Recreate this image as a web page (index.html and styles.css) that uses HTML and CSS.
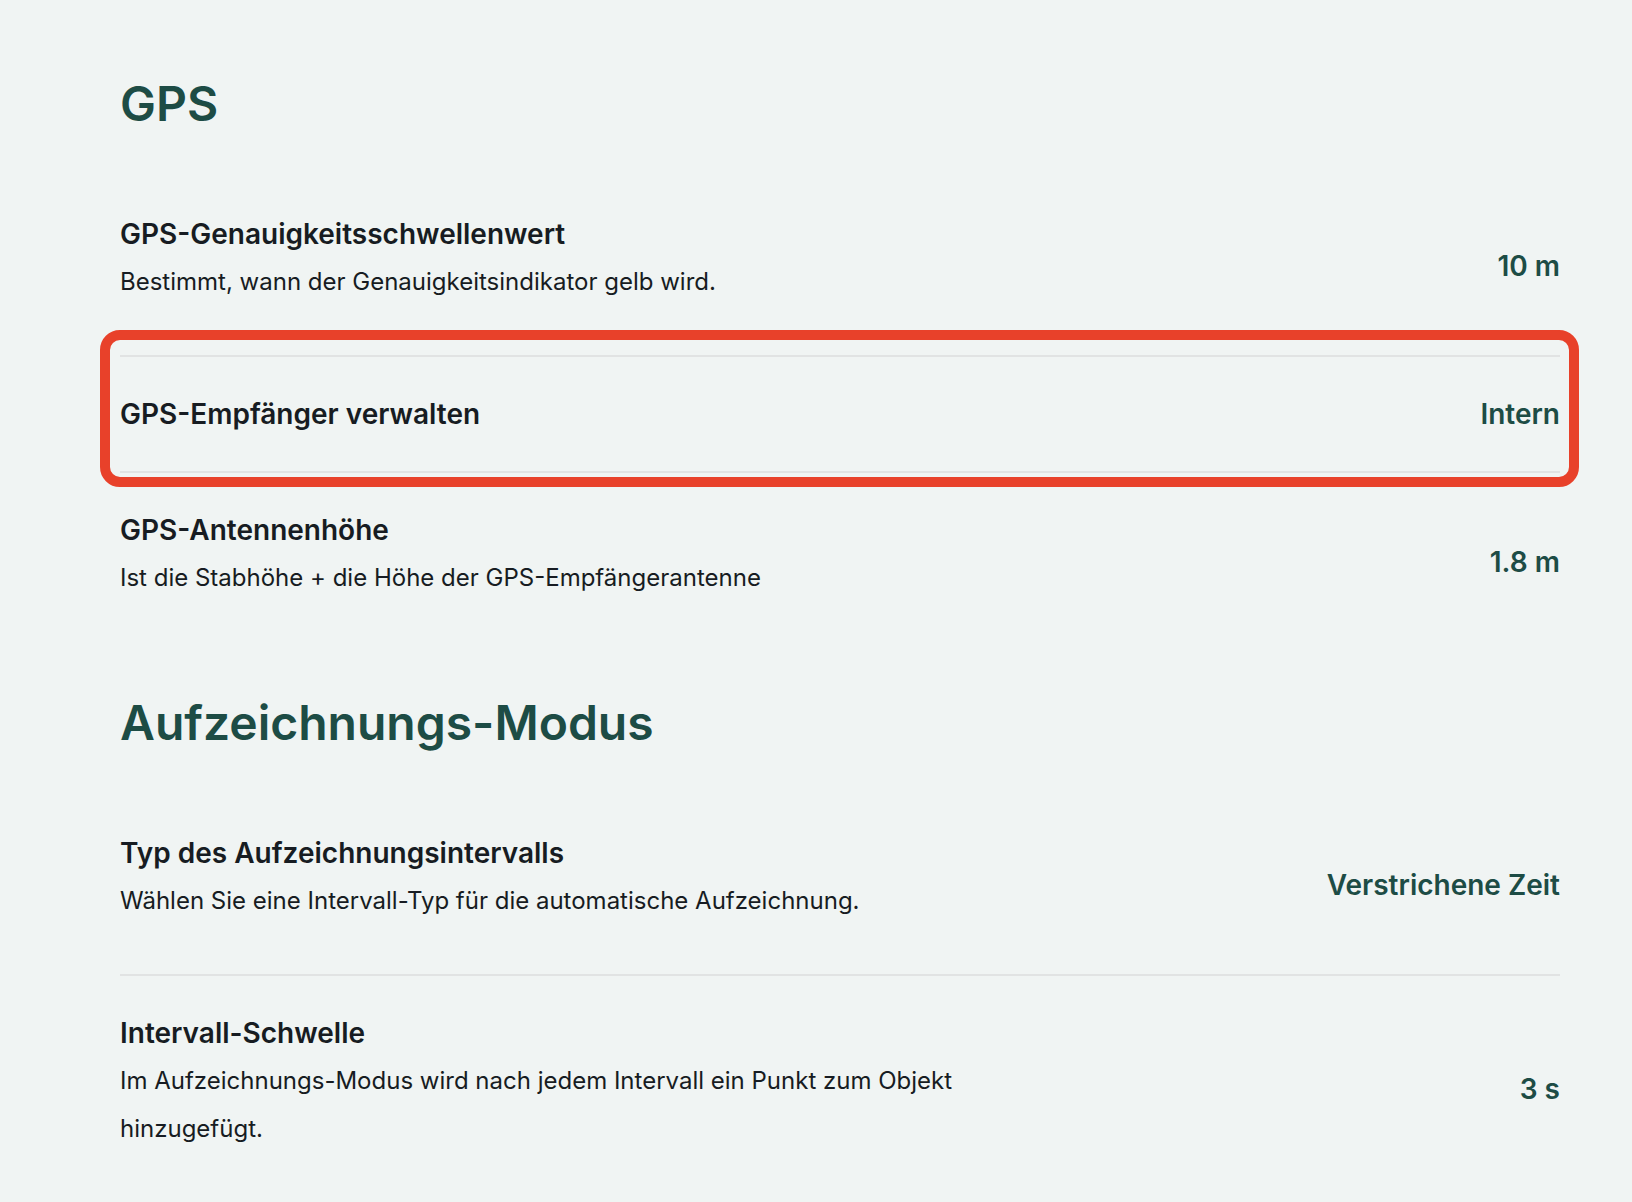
FILE: index.html
```html
<!DOCTYPE html>
<html lang="de">
<head>
<meta charset="utf-8">
<title>Einstellungen</title>
<link rel="stylesheet" href="styles.css">
</head>
<body>
  <div class="page">

    <section class="section">
      <h2 class="section-title">GPS</h2>

      <div class="row">
        <div class="row-text">
          <div class="row-title">GPS-Genauigkeitsschwellenwert</div>
          <div class="row-desc">Bestimmt, wann der Genauigkeitsindikator gelb wird.</div>
        </div>
        <div class="row-value">10 m</div>
      </div>

      <div class="row row-marked">
        <div class="row-text">
          <div class="row-title">GPS-Empfänger verwalten</div>
        </div>
        <div class="row-value">Intern</div>
        <div class="mark"></div>
      </div>

      <div class="row">
        <div class="row-text">
          <div class="row-title">GPS-Antennenhöhe</div>
          <div class="row-desc">Ist die Stabhöhe + die Höhe der GPS-Empfängerantenne</div>
        </div>
        <div class="row-value">1.8 m</div>
      </div>
    </section>

    <section class="section">
      <h2 class="section-title">Aufzeichnungs-Modus</h2>

      <div class="row">
        <div class="row-text">
          <div class="row-title">Typ des Aufzeichnungsintervalls</div>
          <div class="row-desc">Wählen Sie eine Intervall-Typ für die automatische Aufzeichnung.</div>
        </div>
        <div class="row-value">Verstrichene Zeit</div>
      </div>

      <div class="row">
        <div class="row-text">
          <div class="row-title">Intervall-Schwelle</div>
          <div class="row-desc">Im Aufzeichnungs-Modus wird nach jedem Intervall ein Punkt zum Objekt hinzugefügt.</div>
        </div>
        <div class="row-value">3 s</div>
      </div>
    </section>

  </div>
</body>
</html>
```
FILE: styles.css
```css
html, body
{
  margin: 0;
  padding: 0;
  background: #f0f4f3;
}

body
{
  font-family: Inter, "Noto Sans", "Liberation Sans", sans-serif;
  color: #171c22;
}

.page
{
  padding: 32px 72px 0 120px;
}

.section-title /* section heading */
{
  margin: 42px 0 43px;
  font-size: 48px;
  line-height: 60px;
  font-weight: 600;
  color: #1d4c45;
}

.row
{
  display: flex;
  align-items: center;
  justify-content: space-between;
  gap: 40px;
  padding: 33px 0;
}

.row + .row { border-top: 2px solid #e1e3e3; }

.row-text { max-width: 900px; }

.row-title
{
  font-size: 28px;
  line-height: 48px;
  font-weight: 600;
}

.row-desc
{
  font-size: 24px;
  line-height: 48px;
  padding-bottom: 16px;
}

.row-value
{
  flex: none;
  font-size: 28px;
  font-weight: 600;
  color: #1d4c45;
}

/* highlight frame drawn over the row */
.row-marked { position: relative; }

.mark
{
  position: absolute;
  top: -27px;
  left: -20px;
  right: -19px;
  bottom: -16px;
  border: 10px solid #e8412a;
  border-radius: 20px;
  pointer-events: none;
}
```
